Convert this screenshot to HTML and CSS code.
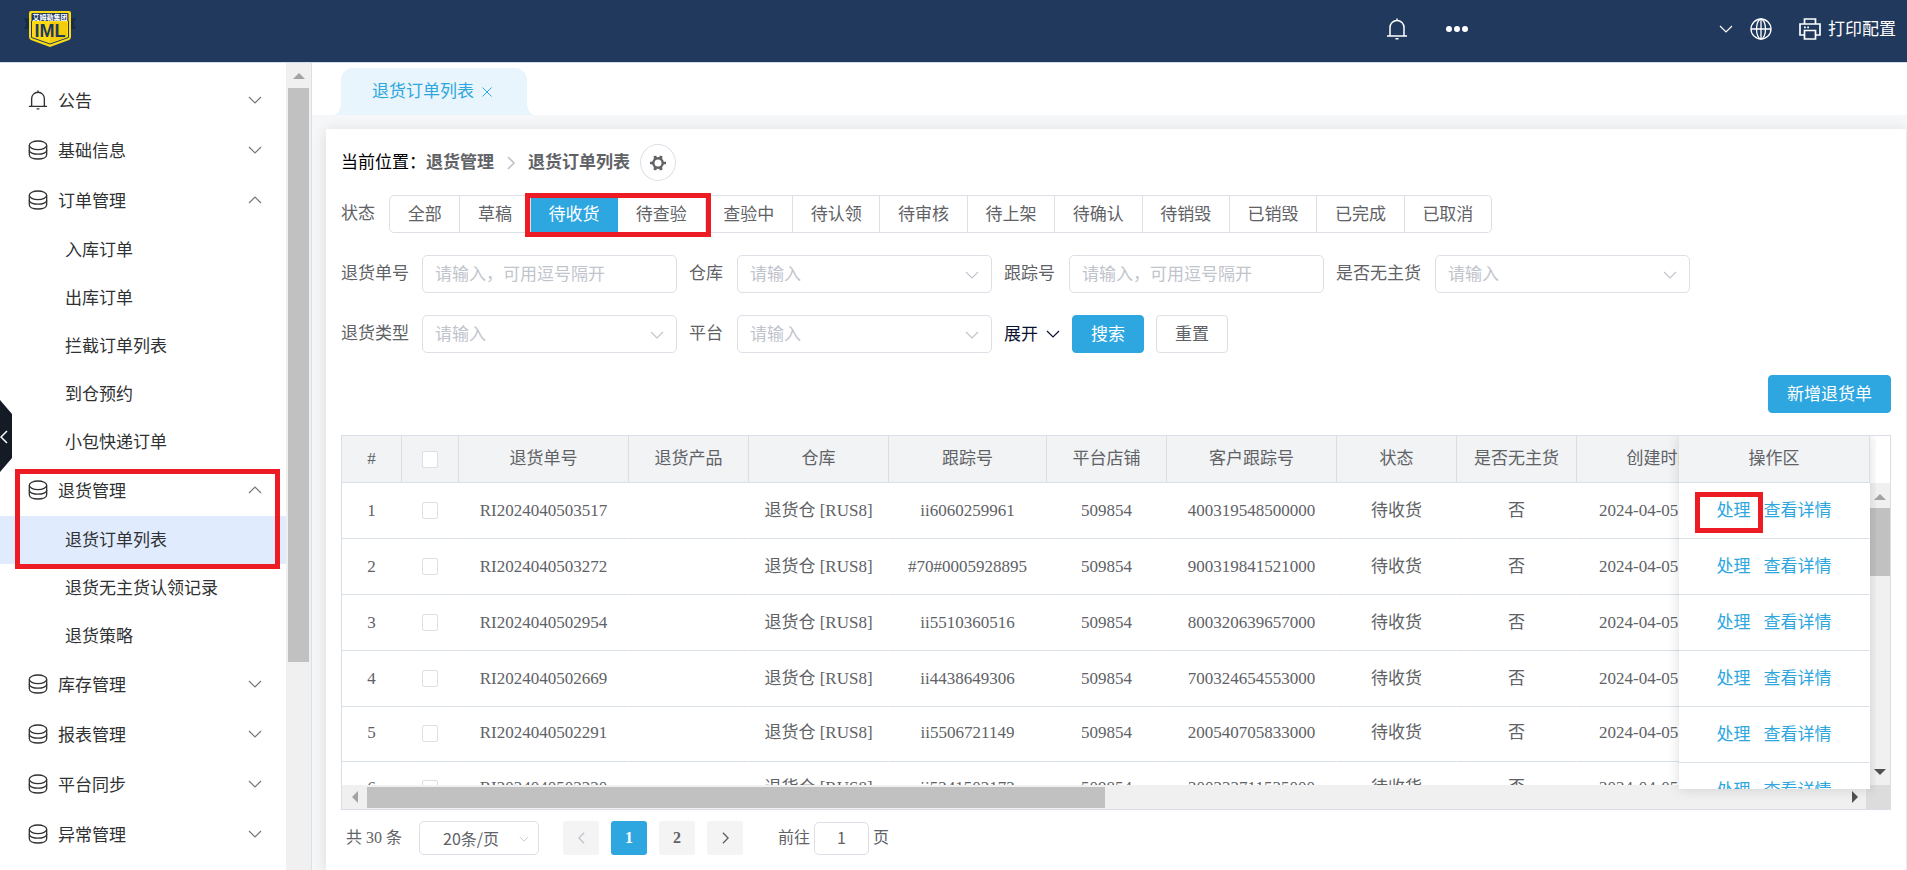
FILE: index.html
```html
<!DOCTYPE html>
<html lang="zh-CN">
<head>
<meta charset="utf-8">
<title>退货订单列表</title>
<link rel="stylesheet" href="styles.css">
</head>
<body>
<svg class="sprite" aria-hidden="true">
  <symbol id="i-down" viewBox="0 0 14 8"><path d="M1 1l6 6 6-6" fill="none" stroke="currentColor" stroke-width="1.2"/></symbol>
  <symbol id="i-up" viewBox="0 0 14 8"><path d="M1 7l6-6 6 6" fill="none" stroke="currentColor" stroke-width="1.2"/></symbol>
  <symbol id="i-left" viewBox="0 0 8 14"><path d="M7 1L1 7l6 6" fill="none" stroke="currentColor" stroke-width="1.6"/></symbol>
  <symbol id="i-right" viewBox="0 0 8 14"><path d="M1 1l6 6-6 6" fill="none" stroke="currentColor" stroke-width="1.6"/></symbol>
  <symbol id="i-bell" viewBox="0 0 22 22"><path d="M1 18h20M4 18V9.500a7 7 0 0 1 14 0V18M11 2.500V.5M9.500 20.800h3" fill="none" stroke="currentColor" stroke-width="1.500"/></symbol>
  <symbol id="i-coins" viewBox="0 0 20 20"><g fill="none" stroke="currentColor" stroke-width="1.300"><ellipse cx="10" cy="5.300" rx="8.700" ry="4.300"/><path d="M1.300 5.500v4.800c0 2.200 3.800 3.900 8.700 3.900s8.700-1.700 8.700-3.900V5.500"/><path d="M1.300 10v4.800c0 2.500 3.800 4.200 8.700 4.200s8.700-1.700 8.700-4.200V10"/></g></symbol>
</svg>

<header class="topbar">
  <svg class="logo" viewBox="0 0 52 38" role="img" aria-label="IML">
    <path d="M0 8h9v11H0l2.500-5.500zM52 8h-9v11h9l-2.500-5.500z" fill="#182b4a"/>
    <path d="M5 3q0-2 2-2h38q2 0 2 2v24q0 2-2 3l-19 7-19-7q-2-1-2-3z" fill="#fbdc14"/>
    <path d="M7.500 4q0-1 1-1h35q1 0 1 1v7h-37z" fill="#1f3860"/>
    <path d="M7.500 11v16.500l18.500 6.500 18.500-6.500V11" fill="none" stroke="#1f3860" stroke-width="1"/>
    <path d="M26 12h17v15l-17 6z" fill="#efc20a" opacity=".6"/>
    <text x="26" y="9.500" class="logo-top">艾姆勒集团</text>
    <text x="26" y="26.500" class="logo-name">IML</text>
  </svg>
  <nav class="top-center">
    <button class="icon-btn" aria-label="通知"><svg class="ic22"><use href="#i-bell"/></svg></button>
    <button class="icon-btn" aria-label="更多"><svg class="ic22" viewBox="0 0 22 22"><g fill="currentColor"><circle cx="3" cy="11" r="3"/><circle cx="11" cy="11" r="3"/><circle cx="19" cy="11" r="3"/></g></svg></button>
  </nav>
  <nav class="top-right">
    <button class="icon-btn" aria-label="账户"><svg class="chev"><use href="#i-down"/></svg></button>
    <button class="icon-btn globe" aria-label="语言"><svg class="ic22" viewBox="0 0 22 22"><g fill="none" stroke="currentColor" stroke-width="1.300"><circle cx="11" cy="11" r="10"/><ellipse cx="11" cy="11" rx="4.500" ry="10"/><path d="M1 11h20M11 1v20"/></g></svg></button>
    <button class="icon-btn print"><svg class="ic22" viewBox="0 0 22 22"><g fill="none" stroke="currentColor" stroke-width="1.700"><path d="M5.500 6V1h11v5M5.500 17H1V6h20v11h-4.500M5.500 12.500h11V21h-11z"/><path d="M5 9.300h1.800M8.200 9.300H10"/></g></svg><span>打印配置</span></button>
  </nav>
</header>

<div class="layout">
  <aside class="sidebar">
    <nav class="menu">
      <button class="group"><svg class="g-ic"><use href="#i-bell"/></svg><span>公告</span><svg class="chev"><use href="#i-down"/></svg></button>
      <button class="group"><svg class="g-ic"><use href="#i-coins"/></svg><span>基础信息</span><svg class="chev"><use href="#i-down"/></svg></button>
      <button class="group"><svg class="g-ic"><use href="#i-coins"/></svg><span>订单管理</span><svg class="chev"><use href="#i-up"/></svg></button>
      <a class="item" href="#">入库订单</a>
      <a class="item" href="#">出库订单</a>
      <a class="item" href="#">拦截订单列表</a>
      <a class="item" href="#">到仓预约</a>
      <a class="item" href="#">小包快递订单</a>
      <div class="marked">
        <button class="group"><svg class="g-ic"><use href="#i-coins"/></svg><span>退货管理</span><svg class="chev"><use href="#i-up"/></svg></button>
        <a class="item active" href="#">退货订单列表</a>
        <div class="mark mark-menu"></div>
      </div>
      <a class="item" href="#">退货无主货认领记录</a>
      <a class="item" href="#">退货策略</a>
      <button class="group"><svg class="g-ic"><use href="#i-coins"/></svg><span>库存管理</span><svg class="chev"><use href="#i-down"/></svg></button>
      <button class="group"><svg class="g-ic"><use href="#i-coins"/></svg><span>报表管理</span><svg class="chev"><use href="#i-down"/></svg></button>
      <button class="group"><svg class="g-ic"><use href="#i-coins"/></svg><span>平台同步</span><svg class="chev"><use href="#i-down"/></svg></button>
      <button class="group"><svg class="g-ic"><use href="#i-coins"/></svg><span>异常管理</span><svg class="chev"><use href="#i-down"/></svg></button>
    </nav>
    <div class="vbar side-bar">
      <svg class="arrow" viewBox="0 0 12 6"><path d="M0 6l6-6 6 6z"/></svg>
      <div class="thumb"></div>
    </div>
    <button class="fold" aria-label="收起"><svg viewBox="0 0 12 72"><path d="M0 0l12 14v44L0 72z" fill="#151b25"/><path d="M7 31l-6 6 6 6" fill="none" stroke="#fff" stroke-width="1.500"/></svg></button>
  </aside>

  <main class="main">
    <div class="tabs"><div class="tab"><a href="#">退货订单列表</a><button class="tab-x" aria-label="关闭"><svg viewBox="0 0 10 10"><path d="M.5.5l9 9M9.500.5l-9 9" stroke="currentColor" fill="none"/></svg></button></div></div>
    <section class="card">
      <div class="head">
        <div class="crumbs">
          <span>当前位置：</span><b>退货管理</b><svg class="sep"><use href="#i-right"/></svg><b>退货订单列表</b>
          <button class="gear" aria-label="设置"><svg viewBox="0 0 16 16"><circle cx="8" cy="8" r="4.700" fill="none" stroke="currentColor" stroke-width="2.400"/><path d="M3.600 1l2.700-.2.700 2.400-3 1.600zM12.400 1L9.700.8 9 3.200l3 1.600zM3.600 15l2.700.2.700-2.400-3-1.600zM12.400 15l-2.700.2-.7-2.400 3-1.600zM0 6.700h3v2.600H0zM13 6.700h3v2.600h-3z" fill="currentColor"/></svg></button>
        </div>
        <div class="status">
          <span class="label">状态</span>
          <div class="seg">
            <button>全部</button><button>草稿</button><button class="on">待收货</button><button>待查验</button><button>查验中</button><button>待认领</button><button>待审核</button><button>待上架</button><button>待确认</button><button>待销毁</button><button>已销毁</button><button>已完成</button><button>已取消</button>
            <div class="mark mark-status"></div>
          </div>
        </div>
      </div>

      <form class="filters">
        <div class="frow">
          <div class="field"><label for="f1">退货单号</label><input id="f1" placeholder="请输入，可用逗号隔开"></div>
          <div class="field"><label for="f2">仓库</label><span class="sel"><select id="f2"><option>请输入</option></select><svg class="chev"><use href="#i-down"/></svg></span></div>
          <div class="field"><label for="f3">跟踪号</label><input id="f3" placeholder="请输入，可用逗号隔开"></div>
          <div class="field"><label for="f4">是否无主货</label><span class="sel"><select id="f4"><option>请输入</option></select><svg class="chev"><use href="#i-down"/></svg></span></div>
        </div>
        <div class="frow">
          <div class="field"><label for="f5">退货类型</label><span class="sel"><select id="f5"><option>请输入</option></select><svg class="chev"><use href="#i-down"/></svg></span></div>
          <div class="field"><label for="f6">平台</label><span class="sel"><select id="f6"><option>请输入</option></select><svg class="chev"><use href="#i-down"/></svg></span></div>
          <button type="button" class="expand"><span>展开</span><svg class="chev"><use href="#i-down"/></svg></button>
          <button type="button" class="btn primary">搜索</button>
          <button type="button" class="btn">重置</button>
        </div>
      </form>

      <div class="actions"><button class="btn primary">新增退货单</button></div>

      <div class="grid">
        <div class="grid-view">
          <table class="tbl main-tbl">
            <colgroup><col class="c60"><col class="c57"><col class="c170"><col class="c120"><col class="c140"><col class="c158"><col class="c120"><col class="c170"><col class="c120"><col class="c120"><col class="c168"><col></colgroup>
            <thead><tr><th>#</th><th><input type="checkbox" aria-label="全选"></th><th>退货单号</th><th>退货产品</th><th>仓库</th><th>跟踪号</th><th>平台店铺</th><th>客户跟踪号</th><th>状态</th><th>是否无主货</th><th>创建时间</th><th></th></tr></thead>
            <tbody>
              <tr><td>1</td><td><input type="checkbox" aria-label="选择第1行"></td><td>RI2024040503517</td><td></td><td>退货仓 [RUS8]</td><td>ii6060259961</td><td>509854</td><td>400319548500000</td><td>待收货</td><td>否</td><td class="date">2024-04-05</td><td></td></tr>
              <tr><td>2</td><td><input type="checkbox" aria-label="选择第2行"></td><td>RI2024040503272</td><td></td><td>退货仓 [RUS8]</td><td>#70#0005928895</td><td>509854</td><td>900319841521000</td><td>待收货</td><td>否</td><td class="date">2024-04-05</td><td></td></tr>
              <tr><td>3</td><td><input type="checkbox" aria-label="选择第3行"></td><td>RI2024040502954</td><td></td><td>退货仓 [RUS8]</td><td>ii5510360516</td><td>509854</td><td>800320639657000</td><td>待收货</td><td>否</td><td class="date">2024-04-05</td><td></td></tr>
              <tr><td>4</td><td><input type="checkbox" aria-label="选择第4行"></td><td>RI2024040502669</td><td></td><td>退货仓 [RUS8]</td><td>ii4438649306</td><td>509854</td><td>700324654553000</td><td>待收货</td><td>否</td><td class="date">2024-04-05</td><td></td></tr>
              <tr class="short"><td>5</td><td><input type="checkbox" aria-label="选择第5行"></td><td>RI2024040502291</td><td></td><td>退货仓 [RUS8]</td><td>ii5506721149</td><td>509854</td><td>200540705833000</td><td>待收货</td><td>否</td><td class="date">2024-04-05</td><td></td></tr>
              <tr class="short"><td>6</td><td><input type="checkbox" aria-label="选择第6行"></td><td>RI2024040502220</td><td></td><td>退货仓 [RUS8]</td><td>ii5241502173</td><td>509854</td><td>300332711535000</td><td>待收货</td><td>否</td><td class="date">2024-04-05</td><td></td></tr>
            </tbody>
          </table>
        </div>
        <div class="grid-side">
          <div class="vbar tbl-bar">
            <svg class="arrow" viewBox="0 0 12 6"><path d="M0 6l6-6 6 6z"/></svg>
            <div class="thumb"></div>
            <svg class="arrow dark" viewBox="0 0 12 6"><path d="M0 0l6 6 6-6z"/></svg>
          </div>
        </div>
        <div class="hbar">
          <svg class="harrow" viewBox="0 0 6 12"><path d="M6 0L0 6l6 6z"/></svg>
          <div class="hthumb"></div>
          <svg class="harrow dark" viewBox="0 0 6 12"><path d="M0 0l6 6-6 6z"/></svg>
          <div class="corner"></div>
        </div>
        <div class="fixed">
          <table class="tbl">
            <thead><tr><th>操作区</th></tr></thead>
            <tbody>
              <tr><td><a href="#">处理</a><a href="#">查看详情</a></td></tr>
              <tr><td><a href="#">处理</a><a href="#">查看详情</a></td></tr>
              <tr><td><a href="#">处理</a><a href="#">查看详情</a></td></tr>
              <tr><td><a href="#">处理</a><a href="#">查看详情</a></td></tr>
              <tr><td><a href="#">处理</a><a href="#">查看详情</a></td></tr>
              <tr><td><a href="#">处理</a><a href="#">查看详情</a></td></tr>
            </tbody>
          </table>
          <div class="mark mark-op"></div>
        </div>
      </div>

      <div class="pager">
        <span class="total">共 30 条</span>
        <span class="sel size"><select aria-label="每页条数"><option>20条/页</option></select><svg class="chev"><use href="#i-down"/></svg></span>
        <div class="pages">
          <button disabled aria-label="上一页"><svg><use href="#i-left"/></svg></button>
          <button class="on">1</button>
          <button>2</button>
          <button aria-label="下一页"><svg><use href="#i-right"/></svg></button>
        </div>
        <div class="jump"><label for="pg">前往</label><input id="pg" value="1"><span>页</span></div>
      </div>
    </section>
  </main>
</div>
</body>
</html>
```
FILE: styles.css
```css
* { box-sizing: border-box; }
body {
  margin: 0;
  height: 100vh;
  display: flex;
  flex-direction: column;
  overflow: hidden;
  font: 17px/24px "Liberation Serif", "Noto Sans CJK SC", serif;
  color: #606266;
  background: #fff;
}
button, input, select {
  font-family: "Noto Sans CJK SC", sans-serif;
  font-size: 17px;
  color: inherit;
  margin: 0;
}
button { padding: 0; background: none; border: 0; }
a { color: inherit; text-decoration: none; }
svg { display: block; flex: none; }
.sprite { position: absolute; width: 0; height: 0; }
.chev { width: 14px; height: 8px; }
.ic22 { width: 22px; height: 22px; }
.mark { position: absolute; border: 5px solid #ed1c24; pointer-events: none; z-index: 3; }

.topbar {
  flex: none;
  height: 63px;
  display: flex;
  align-items: center;
  padding: 0 11px 5px 24px;
  background: #20395c;
  border-bottom: 1px solid #d5dbea;
  color: #fff;
}
.logo { width: 52px; height: 38px; }
.logo-top { font: 700 7px "Noto Sans CJK SC", sans-serif; fill: #fff; text-anchor: middle; }
.logo-name { font: 700 18px "Liberation Sans", sans-serif; fill: #1f3860; text-anchor: middle; }
.top-center { display: flex; gap: 38px; margin-left: auto; }
.top-right { display: flex; align-items: center; margin-left: 251px; }
.icon-btn { display: flex; align-items: center; }
.globe { margin-left: 17px; }
.print { margin-left: 27px; gap: 7px; }
.print span, .expand span { padding-bottom: 3px; }

.layout { flex: 1; min-height: 0; display: flex; }
.sidebar {
  position: relative;
  flex: none;
  width: 312px;
  display: flex;
  overflow: hidden;
  border-right: 1px solid #dcdfe6;
}
.menu { flex: 1; padding-top: 13px; color: #303133; }
.group {
  display: flex;
  align-items: center;
  width: 100%;
  height: 50px;
  padding: 0 24px 2px 28px;
  text-align: left;
}
.group span { padding-bottom: 2px; }
.g-ic { width: 20px; height: 20px; margin-right: 10px; }
.group .chev { margin-left: auto; color: #777; }
.item {
  display: block;
  height: 48px;
  line-height: 46px;
  padding-left: 65px;
  font-family: "Noto Sans CJK SC", sans-serif;
}
.item.active { background: #e0ebfd; }
.marked { position: relative; }
.mark-menu { top: 3px; right: 6px; bottom: -5px; left: 15px; }
.vbar { display: flex; flex-direction: column; align-items: center; background: #f0f0f0; }
.side-bar { width: 25px; padding-top: 10px; }
.arrow { width: 12px; height: 6px; fill: #a3a3a3; }
.dark { fill: #505050; }
.thumb { background: #c1c1c1; }
.side-bar .thumb { width: 21px; height: 574px; margin-top: 9px; }
.fold { position: absolute; left: 0; top: 337px; width: 12px; height: 72px; }

.main { flex: 1; min-width: 0; display: flex; flex-direction: column; background: #f6f7f9; }
.tabs { flex: none; display: flex; align-items: flex-end; height: 52px; padding-left: 29px; background: #fff; }
.tab {
  position: relative;
  display: flex;
  align-items: center;
  gap: 8px;
  height: 47px;
  padding: 0 35px 0 31px;
  border-radius: 12px 12px 0 0;
  background: #e9f5fc;
  color: #2ea6e0;
}
.tab::before, .tab::after { content: ""; position: absolute; bottom: 0; width: 8px; height: 12px; }
.tab::before { left: -8px; background: radial-gradient(8px 12px at 0 0, transparent 98%, #e9f5fc); }
.tab::after { right: -8px; background: radial-gradient(8px 12px at 100% 0, transparent 98%, #e9f5fc); }
.tab-x svg { width: 10px; height: 10px; }

.card {
  flex: 1;
  display: flex;
  flex-direction: column;
  gap: 22px;
  margin: 14px 1px 0 14px;
  padding: 15px 15px 0;
  background: #fff;
  box-shadow: 0 2px 14px rgba(0, 0, 0, .12);
}
.head { display: flex; flex-direction: column; gap: 14px; }
.crumbs { display: flex; align-items: center; height: 37px; }
.crumbs span { color: #000; }
.sep { width: 8px; height: 14px; margin: 0 13px; color: #c0c4cc; }
.gear {
  display: grid;
  place-items: center;
  width: 36px;
  height: 37px;
  margin-left: 10px;
  border: 1px solid #dcdfe6;
  border-radius: 50%;
}
.gear svg { width: 16px; height: 16px; }
.status { display: flex; align-items: center; gap: 14px; }
.seg { position: relative; display: flex; width: 1103px; height: 38px; }
.seg button {
  flex: 1 1 auto;
  padding: 0 16px 4px;
  border: 1px solid #dcdfe6;
  border-left-width: 0;
}
.seg button:first-child { border-left-width: 1px; border-radius: 5px 0 0 5px; }
.seg button:nth-last-child(2) { border-radius: 0 5px 5px 0; }
.seg .on { background: #2ea6e0; border-color: #2ea6e0; color: #fff; }
.mark-status { left: 136px; top: -2px; width: 186px; height: 44px; }

.filters { display: flex; flex-direction: column; gap: 22px; }
.frow { display: flex; align-items: center; gap: 12px; }
.field { display: flex; align-items: center; gap: 14px; }
.field:first-child { gap: 13px; }
.field input, .sel select {
  width: 255px;
  height: 38px;
  padding: 0 12px 4px;
  border: 1px solid #dcdfe6;
  border-radius: 5px;
  background: #fff;
  appearance: none;
  outline: 0;
}
::placeholder { color: #c0c4cc; opacity: 1; }
.sel { position: relative; display: flex; }
.field select { color: #c0c4cc; }
.sel .chev { position: absolute; right: 13px; top: 16px; color: #c0c4cc; }
.expand { display: flex; align-items: center; gap: 8px; color: #0b1130; }
.btn { height: 38px; padding: 0 18px 4px; border: 1px solid #dcdfe6; border-radius: 4px; background: #fff; }
.primary { background: #2ea6e0; border-color: #2ea6e0; color: #fff; }
.actions { display: flex; justify-content: flex-end; }

.grid {
  position: relative;
  display: grid;
  grid-template-columns: minmax(0, 1fr) 20px;
  grid-template-rows: 349px 24px;
  border: 1px solid #d9dee8;
}
.grid-view { overflow: hidden; }
.tbl { width: 100%; table-layout: fixed; border-collapse: separate; border-spacing: 0; text-align: center; }
.tbl th { height: 47px; padding: 0; font-weight: 400; background: #f1f3f5; border-right: 1px solid #d9dfe7; border-bottom: 1px solid #d9dfe7; }
.tbl td { height: 56px; padding: 0; background: #fff; border-bottom: 1px solid #d9e0e8; border-right: 1px solid #fff; }
.tbl .short td { height: 55px; padding-bottom: 2px; }
.tbl .date { text-align: left; padding-left: 22px; }
.tbl input {
  display: block;
  width: 16px;
  height: 17px;
  margin: 0 auto;
  border: 1px solid #dcdfe6;
  border-radius: 2px;
  background: #fff;
  appearance: none;
}
.c57 { width: 57px; }
.c60 { width: 60px; }
.c120 { width: 120px; }
.c140 { width: 140px; }
.c158 { width: 158px; }
.c168 { width: 168px; }
.c170 { width: 170px; }
.grid-side { display: flex; padding-top: 47px; }
.tbl-bar { flex: 1; padding: 11px 0 10px; }
.tbl-bar .thumb { width: 20px; height: 68px; margin: 8px 0 auto; }
.hbar { grid-column: 1 / -1; display: flex; align-items: center; padding-left: 10px; background: #f0f0f0; }
.harrow { width: 6px; height: 12px; fill: #a3a3a3; }
.hthumb { width: 48%; height: 21px; margin: 0 auto 0 9px; background: #c1c1c1; }
.hbar .dark { fill: #505050; }
.corner { width: 24px; height: 24px; margin-left: 8px; background: #dcdcdc; }
.fixed {
  position: absolute;
  top: 0;
  right: 20px;
  width: 191px;
  height: 353px;
  overflow: hidden;
  background: #fff;
}
.grid::after {
  content: "";
  position: absolute;
  top: 0;
  right: 20px;
  width: 191px;
  height: 353px;
  box-shadow: 0 0 12px rgba(0, 0, 0, .14);
  clip-path: inset(0 -6px -12px -12px);
  pointer-events: none;
}
.fixed a { color: #2ea6e0; }
.fixed a + a { margin-left: 13px; }
.mark-op { left: 16px; top: 56px; width: 68px; height: 41px; }

.pager { display: flex; align-items: center; height: 34px; margin-top: -11px; padding-left: 5px; font-size: 16px; }
.size { margin-left: 17px; }
.size select { width: 120px; height: 34px; padding: 0 0 0 23px; font-size: 16px; }
.size .chev { width: 10px; height: 6px; right: 10px; top: 15px; }
.pages { display: flex; gap: 12px; margin-left: 24px; }
.pages button {
  display: grid;
  place-items: center;
  width: 36px;
  height: 34px;
  border-radius: 3px;
  background: #f4f4f5;
  font: 700 16px "Liberation Serif", serif;
}
.pages svg { width: 7px; height: 12px; }
.pages button:disabled { color: #c0c4cc; }
.pages .on { background: #2ea6e0; color: #fff; }
.jump { display: flex; align-items: center; gap: 4px; margin-left: 35px; }
.jump input { width: 55px; height: 33px; padding: 0 0 2px; border: 1px solid #dcdfe6; border-radius: 5px; text-align: center; font-size: 16px; }
```
